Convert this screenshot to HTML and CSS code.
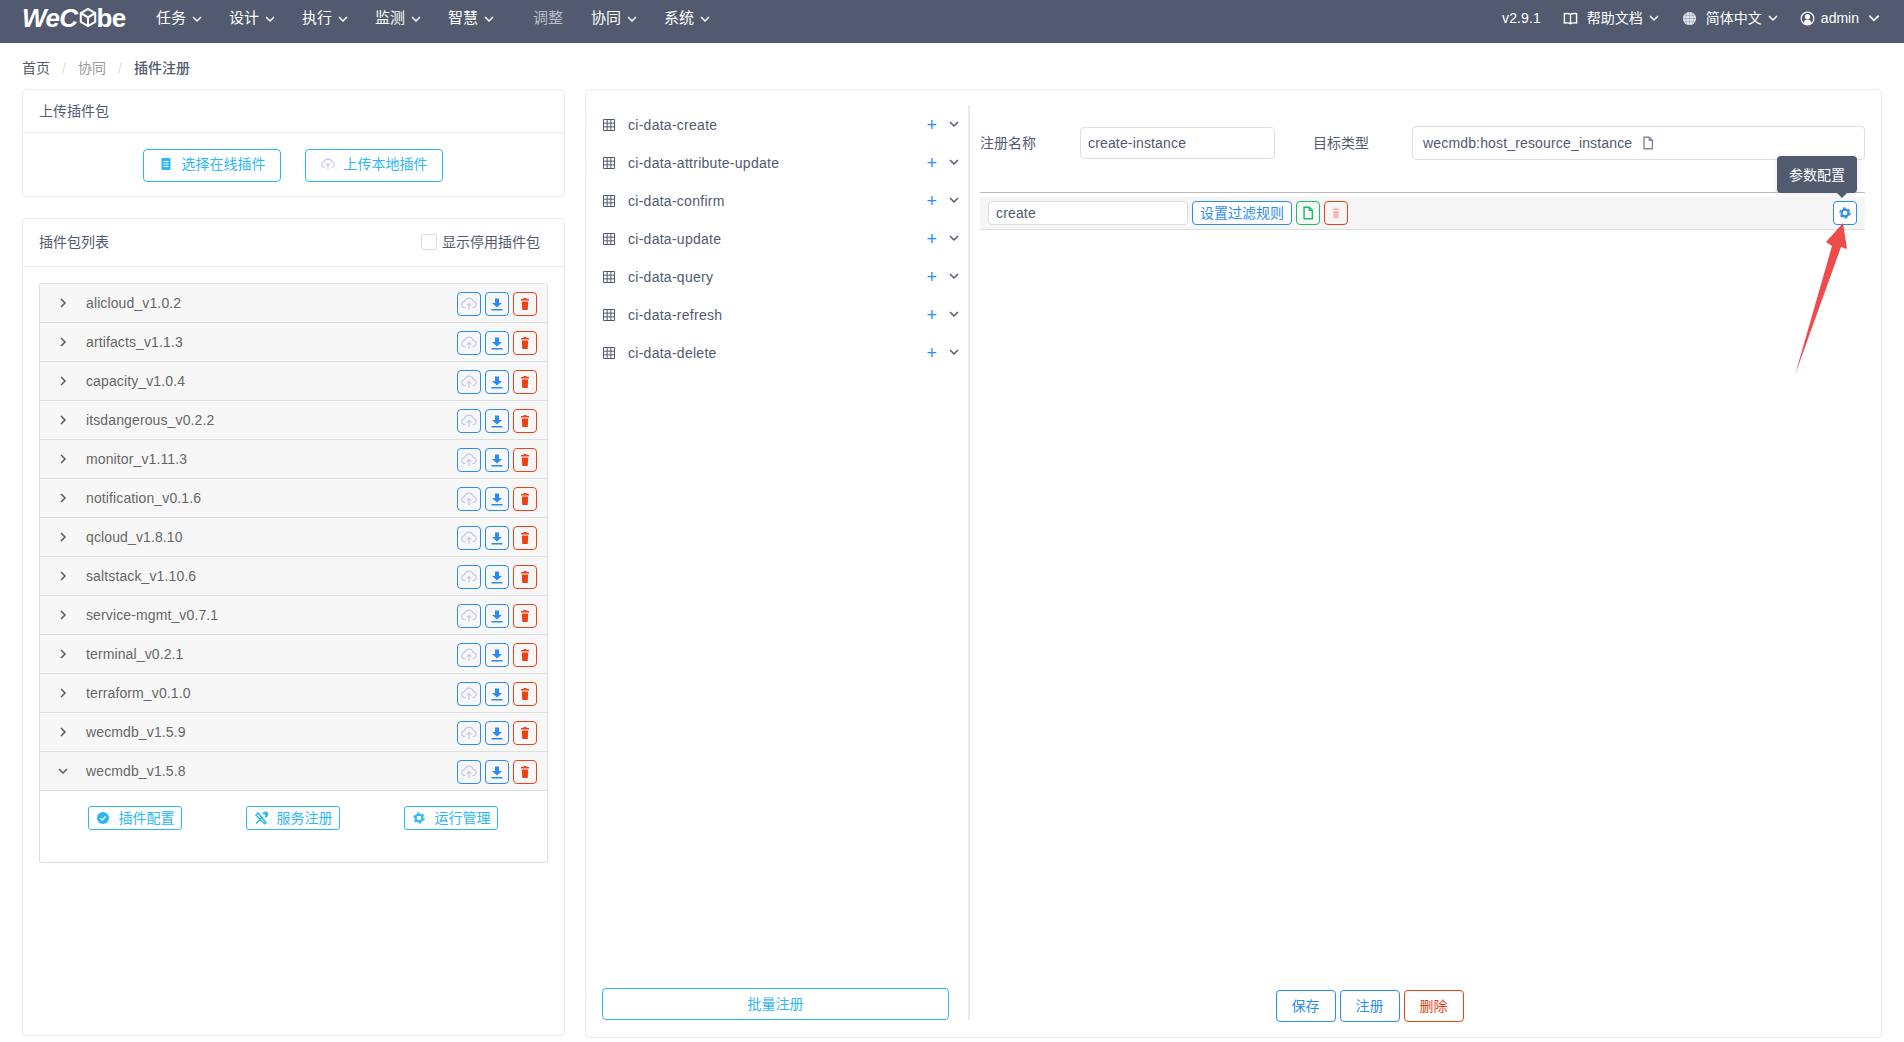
FILE: index.html
```html
<!DOCTYPE html>
<html lang="zh-CN">
<head>
<meta charset="utf-8">
<title>插件注册</title>
<link rel="stylesheet" href="styles.css">
</head>
<body>
<svg class="defs" width="0" height="0">
  <defs>
    <symbol id="chev-d" viewBox="0 0 12 12"><path d="M2 4l4 4 4-4" fill="none" stroke="currentColor" stroke-width="1.5"/></symbol>
    <symbol id="chev-r" viewBox="0 0 12 12"><path d="M4 2l4 4-4 4" fill="none" stroke="currentColor" stroke-width="1.5"/></symbol>
    <symbol id="cloud" viewBox="0 0 16 16"><path d="M4.500 11.500H4a3 3 0 0 1-.4-6 4.500 4.500 0 0 1 8.700 0 3 3 0 0 1-.3 6h-.5M8 14V7.500M5.700 9.600L8 7.300l2.300 2.300" fill="none" stroke="currentColor" stroke-width="1.200"/></symbol>
    <symbol id="download" viewBox="0 0 16 16"><path d="M6 2.500h4v4.500h3L8 11.500 3 7h3zM2.500 13h11v1.500h-11z" fill="currentColor"/></symbol>
    <symbol id="trash" viewBox="0 0 16 16"><path d="M6.500 2h3v1H12v1.500H4V3h2.500zM4.800 5.500h6.400L10.700 14H5.300z" fill="currentColor"/></symbol>
    <symbol id="grid" viewBox="0 0 12 12"><path d="M.5.500h11v11H.500zM4.170.500v11M7.830.500v11M.500 4.170h11M.500 7.830h11" fill="none" stroke="currentColor"/></symbol>
    <symbol id="gear" viewBox="0 0 16 16"><circle cx="8" cy="8" r="3.900" fill="none" stroke="currentColor" stroke-width="2.400"/><circle cx="8" cy="8" r="5.800" fill="none" stroke="currentColor" stroke-width="1.600" stroke-dasharray="3 3.070"/></symbol>
    <symbol id="file" viewBox="0 0 16 16"><path d="M3.500 1.500h6l3.500 3.500v9.500H3.500zM9.500 1.500V5H13" fill="none" stroke="currentColor" stroke-width="1.600"/></symbol>
  </defs>
</svg>

<header class="topbar">
  <div class="logo"><span class="logo-italic">WeC</span><svg class="logo-cube" viewBox="0 0 20 22"><path d="M10 1.500l8 4.500v10l-8 4.500-8-4.500V6zM2 6l8 5 8-5M10 11v9.500" fill="none" stroke="#fff" stroke-width="2.300"/></svg><span>be</span></div>
  <nav class="nav">
    <a class="nav-item">任务<svg class="chev"><use href="#chev-d"/></svg></a>
    <a class="nav-item">设计<svg class="chev"><use href="#chev-d"/></svg></a>
    <a class="nav-item">执行<svg class="chev"><use href="#chev-d"/></svg></a>
    <a class="nav-item">监测<svg class="chev"><use href="#chev-d"/></svg></a>
    <a class="nav-item">智慧<svg class="chev"><use href="#chev-d"/></svg></a>
    <a class="nav-item nav-disabled">调整</a>
    <a class="nav-item">协同<svg class="chev"><use href="#chev-d"/></svg></a>
    <a class="nav-item">系统<svg class="chev"><use href="#chev-d"/></svg></a>
  </nav>
  <div class="top-right">
    <span class="version">v2.9.1</span>
    <span class="top-link help"><svg class="top-icon" viewBox="0 0 16 16"><path d="M8 3.500C6.500 2.500 4 2.500 1.500 2.800v10C4 12.500 6.500 12.500 8 13.500c1.500-1 4-1 6.500-.7v-10C12 2.500 9.500 2.500 8 3.500zM8 3.500v10" fill="none" stroke="currentColor" stroke-width="1.500"/></svg>帮助文档<svg class="chev"><use href="#chev-d"/></svg></span>
    <span class="top-link lang"><svg class="top-icon" viewBox="0 0 16 16"><circle cx="8" cy="8" r="7" fill="#e4e6ea"/><path d="M1 8h14M8 1v14M2.500 4.500h11M2.500 11.500h11M5 2c-1.500 3.500-1.500 8.500 0 12M11 2c1.500 3.500 1.500 8.500 0 12" fill="none" stroke="#9aa0ad" stroke-width=".7"/></svg>简体中文<svg class="chev"><use href="#chev-d"/></svg></span>
    <span class="top-link user"><svg class="top-icon" viewBox="0 0 16 16"><circle cx="8" cy="8" r="6.800" fill="none" stroke="currentColor" stroke-width="1.200"/><circle cx="8" cy="6" r="2.700" fill="currentColor"/><path d="M3.800 13c.5-3 2-4 4.200-4s3.700 1 4.200 4c-2.500 1.800-5.900 1.800-8.400 0z" fill="currentColor"/></svg>admin<svg class="chev chev-big"><use href="#chev-d"/></svg></span>
  </div>
</header>

<div class="crumbs">
  <span class="crumb-home">首页</span><span class="crumb-sep">/</span><span class="crumb-mid">协同</span><span class="crumb-sep">/</span><span class="crumb-cur">插件注册</span>
</div>

<main class="layout">
  <div class="left-col">
    <section class="card upload-card">
      <div class="card-head">上传插件包</div>
      <div class="upload-body">
        <button class="btn-sky upload-btn"><svg class="ic14" viewBox="0 0 14 14"><path d="M2.500 1h9v12h-9z" fill="#2db7f5"/><path d="M4.500 4.500h5M4.500 7h5M4.500 9.500h5" stroke="#fff" stroke-width="1.100"/></svg>选择在线插件</button>
        <button class="btn-sky upload-btn"><svg class="ic14 ic-pale"><use href="#cloud"/></svg>上传本地插件</button>
      </div>
    </section>

    <section class="card list-card">
      <div class="card-head list-head">
        <span>插件包列表</span>
        <label class="check"><span class="check-box"></span>显示停用插件包</label>
      </div>
      <div class="list-body">
        <div class="collapse">
          <div class="pkg"><svg class="pkg-chev"><use href="#chev-r"/></svg><span class="pkg-name">alicloud_v1.0.2</span><span class="pkg-actions"><span class="sq sq-blue"><svg class="ic16 ic-pale"><use href="#cloud"/></svg></span><span class="sq sq-blue"><svg class="ic16 ic-blue"><use href="#download"/></svg></span><span class="sq sq-red"><svg class="ic16 ic-red"><use href="#trash"/></svg></span></span></div>
          <div class="pkg"><svg class="pkg-chev"><use href="#chev-r"/></svg><span class="pkg-name">artifacts_v1.1.3</span><span class="pkg-actions"><span class="sq sq-blue"><svg class="ic16 ic-pale"><use href="#cloud"/></svg></span><span class="sq sq-blue"><svg class="ic16 ic-blue"><use href="#download"/></svg></span><span class="sq sq-red"><svg class="ic16 ic-red"><use href="#trash"/></svg></span></span></div>
          <div class="pkg"><svg class="pkg-chev"><use href="#chev-r"/></svg><span class="pkg-name">capacity_v1.0.4</span><span class="pkg-actions"><span class="sq sq-blue"><svg class="ic16 ic-pale"><use href="#cloud"/></svg></span><span class="sq sq-blue"><svg class="ic16 ic-blue"><use href="#download"/></svg></span><span class="sq sq-red"><svg class="ic16 ic-red"><use href="#trash"/></svg></span></span></div>
          <div class="pkg"><svg class="pkg-chev"><use href="#chev-r"/></svg><span class="pkg-name">itsdangerous_v0.2.2</span><span class="pkg-actions"><span class="sq sq-blue"><svg class="ic16 ic-pale"><use href="#cloud"/></svg></span><span class="sq sq-blue"><svg class="ic16 ic-blue"><use href="#download"/></svg></span><span class="sq sq-red"><svg class="ic16 ic-red"><use href="#trash"/></svg></span></span></div>
          <div class="pkg"><svg class="pkg-chev"><use href="#chev-r"/></svg><span class="pkg-name">monitor_v1.11.3</span><span class="pkg-actions"><span class="sq sq-blue"><svg class="ic16 ic-pale"><use href="#cloud"/></svg></span><span class="sq sq-blue"><svg class="ic16 ic-blue"><use href="#download"/></svg></span><span class="sq sq-red"><svg class="ic16 ic-red"><use href="#trash"/></svg></span></span></div>
          <div class="pkg"><svg class="pkg-chev"><use href="#chev-r"/></svg><span class="pkg-name">notification_v0.1.6</span><span class="pkg-actions"><span class="sq sq-blue"><svg class="ic16 ic-pale"><use href="#cloud"/></svg></span><span class="sq sq-blue"><svg class="ic16 ic-blue"><use href="#download"/></svg></span><span class="sq sq-red"><svg class="ic16 ic-red"><use href="#trash"/></svg></span></span></div>
          <div class="pkg"><svg class="pkg-chev"><use href="#chev-r"/></svg><span class="pkg-name">qcloud_v1.8.10</span><span class="pkg-actions"><span class="sq sq-blue"><svg class="ic16 ic-pale"><use href="#cloud"/></svg></span><span class="sq sq-blue"><svg class="ic16 ic-blue"><use href="#download"/></svg></span><span class="sq sq-red"><svg class="ic16 ic-red"><use href="#trash"/></svg></span></span></div>
          <div class="pkg"><svg class="pkg-chev"><use href="#chev-r"/></svg><span class="pkg-name">saltstack_v1.10.6</span><span class="pkg-actions"><span class="sq sq-blue"><svg class="ic16 ic-pale"><use href="#cloud"/></svg></span><span class="sq sq-blue"><svg class="ic16 ic-blue"><use href="#download"/></svg></span><span class="sq sq-red"><svg class="ic16 ic-red"><use href="#trash"/></svg></span></span></div>
          <div class="pkg"><svg class="pkg-chev"><use href="#chev-r"/></svg><span class="pkg-name">service-mgmt_v0.7.1</span><span class="pkg-actions"><span class="sq sq-blue"><svg class="ic16 ic-pale"><use href="#cloud"/></svg></span><span class="sq sq-blue"><svg class="ic16 ic-blue"><use href="#download"/></svg></span><span class="sq sq-red"><svg class="ic16 ic-red"><use href="#trash"/></svg></span></span></div>
          <div class="pkg"><svg class="pkg-chev"><use href="#chev-r"/></svg><span class="pkg-name">terminal_v0.2.1</span><span class="pkg-actions"><span class="sq sq-blue"><svg class="ic16 ic-pale"><use href="#cloud"/></svg></span><span class="sq sq-blue"><svg class="ic16 ic-blue"><use href="#download"/></svg></span><span class="sq sq-red"><svg class="ic16 ic-red"><use href="#trash"/></svg></span></span></div>
          <div class="pkg"><svg class="pkg-chev"><use href="#chev-r"/></svg><span class="pkg-name">terraform_v0.1.0</span><span class="pkg-actions"><span class="sq sq-blue"><svg class="ic16 ic-pale"><use href="#cloud"/></svg></span><span class="sq sq-blue"><svg class="ic16 ic-blue"><use href="#download"/></svg></span><span class="sq sq-red"><svg class="ic16 ic-red"><use href="#trash"/></svg></span></span></div>
          <div class="pkg"><svg class="pkg-chev"><use href="#chev-r"/></svg><span class="pkg-name">wecmdb_v1.5.9</span><span class="pkg-actions"><span class="sq sq-blue"><svg class="ic16 ic-pale"><use href="#cloud"/></svg></span><span class="sq sq-blue"><svg class="ic16 ic-blue"><use href="#download"/></svg></span><span class="sq sq-red"><svg class="ic16 ic-red"><use href="#trash"/></svg></span></span></div>
          <div class="pkg"><svg class="pkg-chev"><use href="#chev-d"/></svg><span class="pkg-name">wecmdb_v1.5.8</span><span class="pkg-actions"><span class="sq sq-blue"><svg class="ic16 ic-pale"><use href="#cloud"/></svg></span><span class="sq sq-blue"><svg class="ic16 ic-blue"><use href="#download"/></svg></span><span class="sq sq-red"><svg class="ic16 ic-red"><use href="#trash"/></svg></span></span></div>
          <div class="pkg-open">
            <button class="btn-sky pkg-btn"><svg class="ic14" viewBox="0 0 14 14"><circle cx="7" cy="7" r="6" fill="#2db7f5"/><path d="M4.300 7.200l2 1.800 3.300-3.600" fill="none" stroke="#fff" stroke-width="1.300"/></svg>插件配置</button>
            <button class="btn-sky pkg-btn"><svg class="ic14" viewBox="0 0 14 14"><path d="M2 12.500L8.500 6M4 2l8 9.500-1.300 1.200L2 4zM8.800 3c1-1.500 2.500-2 3.700-1.500L11 3.300l.8.800 1.700-1.300c.3 1.500-.5 3-2.500 3.200" fill="none" stroke="#2db7f5" stroke-width="1.500"/></svg>服务注册</button>
            <button class="btn-sky pkg-btn"><svg class="ic14 ic-sky"><use href="#gear"/></svg>运行管理</button>
          </div>
        </div>
      </div>
    </section>
  </div>

  <section class="card main-card">
    <div class="svc-col">
      <ul class="svc-list">
        <li class="svc"><svg class="svc-grid"><use href="#grid"/></svg><span class="svc-name">ci-data-create</span><span class="svc-plus">+</span><svg class="svc-chev"><use href="#chev-d"/></svg></li>
        <li class="svc"><svg class="svc-grid"><use href="#grid"/></svg><span class="svc-name">ci-data-attribute-update</span><span class="svc-plus">+</span><svg class="svc-chev"><use href="#chev-d"/></svg></li>
        <li class="svc"><svg class="svc-grid"><use href="#grid"/></svg><span class="svc-name">ci-data-confirm</span><span class="svc-plus">+</span><svg class="svc-chev"><use href="#chev-d"/></svg></li>
        <li class="svc"><svg class="svc-grid"><use href="#grid"/></svg><span class="svc-name">ci-data-update</span><span class="svc-plus">+</span><svg class="svc-chev"><use href="#chev-d"/></svg></li>
        <li class="svc"><svg class="svc-grid"><use href="#grid"/></svg><span class="svc-name">ci-data-query</span><span class="svc-plus">+</span><svg class="svc-chev"><use href="#chev-d"/></svg></li>
        <li class="svc"><svg class="svc-grid"><use href="#grid"/></svg><span class="svc-name">ci-data-refresh</span><span class="svc-plus">+</span><svg class="svc-chev"><use href="#chev-d"/></svg></li>
        <li class="svc"><svg class="svc-grid"><use href="#grid"/></svg><span class="svc-name">ci-data-delete</span><span class="svc-plus">+</span><svg class="svc-chev"><use href="#chev-d"/></svg></li>
      </ul>
      <button class="batch-btn">批量注册</button>
    </div>
    <div class="form-col">
      <div class="form-row">
        <span class="form-label">注册名称</span>
        <span class="field name-field">create-instance</span>
        <span class="form-label type-label">目标类型</span>
        <span class="field target-field">wecmdb:host_resource_instance<svg class="target-icon"><use href="#file"/></svg></span>
      </div>
      <div class="inst-row">
        <span class="field inst-input">create</span>
        <button class="filter-btn">设置过滤规则</button>
        <span class="sq sq-green"><svg class="ic14 ic-green"><use href="#file"/></svg></span>
        <span class="sq sq-red"><svg class="ic14 ic-palered"><use href="#trash"/></svg></span>
        <span class="gear-wrap">
          <span class="tooltip">参数配置</span>
          <span class="sq sq-blue sq-white"><svg class="ic14 ic-blue"><use href="#gear"/></svg></span>
        </span>
      </div>
      <div class="form-actions">
        <button class="act act-blue">保存</button>
        <button class="act act-blue">注册</button>
        <button class="act act-red">删除</button>
      </div>
    </div>
  </section>
</main>

<svg class="annot-arrow" viewBox="0 0 60 154" width="60" height="154"><path d="M48 1L52 27L46 25L0 153L37 24L31 20z" fill="#ee4b4b"/></svg>
</body>
</html>
```
FILE: styles.css
```css
* { box-sizing: border-box; }
html, body { margin: 0; padding: 0; }
body {
  width: 1904px;
  height: 1042px;
  overflow: hidden;
  position: relative;
  background: #fff;
  color: #515a6e;
  font-family: "Liberation Sans", "Noto Sans CJK SC", sans-serif;
  font-size: 14px;
  line-height: 20px;
}
.defs { position: absolute; }
button { font: inherit; cursor: pointer; background: #fff; margin: 0; }
ul { list-style: none; margin: 0; padding: 0; }
svg { display: block; flex: none; }

.topbar {
  height: 43px;
  background: #515a6e;
  color: #fff;
  display: flex;
  align-items: center;
  padding: 0 23px 7px 22px;
}
.logo {
  width: 134px;
  display: flex;
  align-items: center;
  font-size: 26px;
  font-weight: 700;
  letter-spacing: -.6px;
  line-height: 30px;
  margin-bottom: 1px;
}
.logo-italic { font-style: italic; }
.logo-cube { width: 18px; height: 21px; margin: 0 0 0 1px; }
.nav { display: flex; align-items: center; font-size: 15px; }
.nav-item { display: flex; align-items: center; width: 73px; gap: 5px; }
.nav-item .chev { margin-top: 1px; }
.nav-disabled { color: #bbbec4; width: 58px; margin-left: 12px; }
.chev { width: 12px; height: 12px; }
.chev-big { width: 14px; height: 14px; }
.top-right { margin-left: auto; display: flex; align-items: center; }
.version { margin-right: 22px; letter-spacing: .1px; }
.top-link { display: flex; align-items: center; }
.top-icon { width: 15px; height: 15px; margin-right: 9px; }
.top-link .chev { margin-left: 5px; }
.help { margin-right: 22px; }
.lang { margin-right: 21px; }
.user .top-icon { margin-right: 6px; }
.user .chev { margin-left: 8px; }

.crumbs {
  height: 46px;
  padding: 15px 0 0 22px;
  display: flex;
  color: #515a6e;
}
.crumb-sep { color: #dcdee2; width: 28px; text-align: center; }
.crumb-mid { color: #999; }
.crumb-cur { font-weight: 500; }

.layout {
  display: flex;
  gap: 20px;
  padding: 0 22px;
  height: 949px;
  align-items: flex-start;
}
.left-col { width: 543px; display: flex; flex-direction: column; gap: 21px; height: 947px; }
.card { border: 1px solid #e8eaec; border-radius: 4px; background: #fff; }
.card-head {
  height: 43px;
  padding: 0 16px;
  display: flex;
  align-items: center;
  border-bottom: 1px solid #e8eaec;
}
.upload-card { height: 108px; }
.upload-body { display: flex; justify-content: center; gap: 24px; padding-top: 16px; padding-right: 1px; }
.btn-sky {
  border: 1px solid #2db7f5;
  color: #2db7f5;
  border-radius: 4px;
  padding: 0;
  display: flex;
  align-items: center;
  justify-content: center;
}
.upload-btn { width: 138px; height: 33px; gap: 9px; padding-bottom: 3px; }
.ic14 { width: 14px; height: 14px; }
.ic16 { width: 16px; height: 16px; }
.ic-pale { color: #c5c8f5; }
.ic-blue { color: #2d8cf0; }
.ic-red { color: #ed4014; }
.ic-sky { color: #2db7f5; }
.ic-green { color: #19be6b; }
.ic-palered { color: #f5b5b0; }

.list-card { flex: 1; min-height: 0; }
.list-head { height: 48px; justify-content: space-between; padding-bottom: 2px; }
.check { display: flex; align-items: center; gap: 5px; margin-right: 8px; }
.check-box { width: 16px; height: 16px; border: 1px solid #dcdee2; border-radius: 2px; background: #fff; }
.list-body { padding: 16px 16px 0; }
.collapse { border: 1px solid #dcdee2; border-radius: 3px; background: #fff; height: 580px; }
.pkg {
  height: 39px;
  background: #f7f7f7;
  border-bottom: 1px solid #dcdee2;
  display: flex;
  align-items: center;
  color: #666;
}
.pkg-chev { width: 12px; height: 12px; margin-left: 17px; color: #515a6e; }
.pkg-name { margin-left: 17px; flex: 1; color: #666; letter-spacing: .12px; }
.pkg-actions { display: flex; gap: 4px; margin-right: 10px; margin-top: 1px; }
.sq {
  width: 24px;
  height: 24px;
  border-radius: 4px;
  border: 1px solid;
  display: flex;
  align-items: center;
  justify-content: center;
  background: transparent;
  flex: none;
}
.sq-blue { border-color: #2d8cf0; }
.sq-red { border-color: #ed4014; }
.sq-green { border-color: #19be6b; }
.sq-white { background: #fff; }
.pkg-open { display: flex; justify-content: space-between; padding: 15px 49px 0 48px; }
.pkg-btn { width: 94px; height: 24px; gap: 9px; border-radius: 3px; }

.main-card { flex: 1; height: 949px; display: flex; padding: 15px 16px 0 16px; }
.svc-col { width: 368px; height: 915px; border-right: 2px solid #e8eaec; display: flex; flex-direction: column; padding-right: 16px; }
.svc-list { padding-top: 1px; flex: 1; }
.svc { height: 38px; display: flex; align-items: center; color: #515a6e; }
.svc-grid { width: 12px; height: 12px; margin-left: 1px; color: #515a6e; }
.svc-name { margin-left: 13px; flex: 1; letter-spacing: .27px; }
.svc-plus { color: #2d8cf0; font-size: 18px; margin-right: 11px; }
.svc-chev { width: 12px; height: 12px; margin-right: -8px; margin-bottom: 2px; }
.batch-btn {
  height: 32px;
  width: 347px;
  border: 1px solid #2db7f5;
  border-radius: 4px;
  color: #2db7f5;
}
.form-col { flex: 1; min-width: 0; padding-left: 10px; display: flex; flex-direction: column; height: 933px; }
.form-row { display: flex; align-items: center; height: 88px; padding-bottom: 11px; border-bottom: 1px solid #bbb; }
.form-label { color: #515a6e; }
.field { border: 1px solid #dcdee2; border-radius: 4px; background: #fff; display: flex; align-items: center; flex: none; letter-spacing: .16px; }
.name-field { width: 195px; height: 32px; margin-left: 44px; padding-left: 7px; }
.type-label { margin-left: 38px; }
.target-field { flex: 1; height: 34px; margin-left: 43px; padding-left: 10px; }
.target-icon { width: 14px; height: 14px; margin-left: 9px; color: #7d8aa0; }
.inst-row {
  height: 33px;
  margin-top: 4px;
  background: #f6f6f6;
  border-bottom: 1px solid #dcdee2;
  display: flex;
  align-items: center;
  padding: 0 8px;
  gap: 4px;
}
.inst-input { width: 200px; height: 24px; padding-left: 7px; }
.filter-btn { width: 100px; height: 24px; padding: 0; border: 1px solid #2d8cf0; border-radius: 4px; color: #2d8cf0; background: #fff; }
.gear-wrap { margin-left: auto; position: relative; }
.tooltip {
  position: absolute;
  right: 0;
  bottom: 32px;
  width: 80px;
  height: 37px;
  background: #515a6e;
  color: #fff;
  border-radius: 4px;
  display: flex;
  align-items: center;
  justify-content: center;
  box-shadow: 0 1px 6px rgba(0,0,0,.1);
}
.tooltip::after {
  content: "";
  position: absolute;
  right: 10px;
  bottom: -5px;
  border: 5px solid transparent;
  border-top-color: #515a6e;
  border-bottom-width: 0;
}
.form-actions { margin-top: auto; margin-bottom: 16px; padding-right: 106px; display: flex; justify-content: center; gap: 4px; }
.act { width: 60px; height: 32px; border: 1px solid; border-radius: 4px; padding: 0; }
.act-blue { color: #2d8cf0; border-color: #2d8cf0; }
.act-red { color: #ed4014; border-color: #ed4014; }

.annot-arrow { position: absolute; left: 1795px; top: 222px; }
```
